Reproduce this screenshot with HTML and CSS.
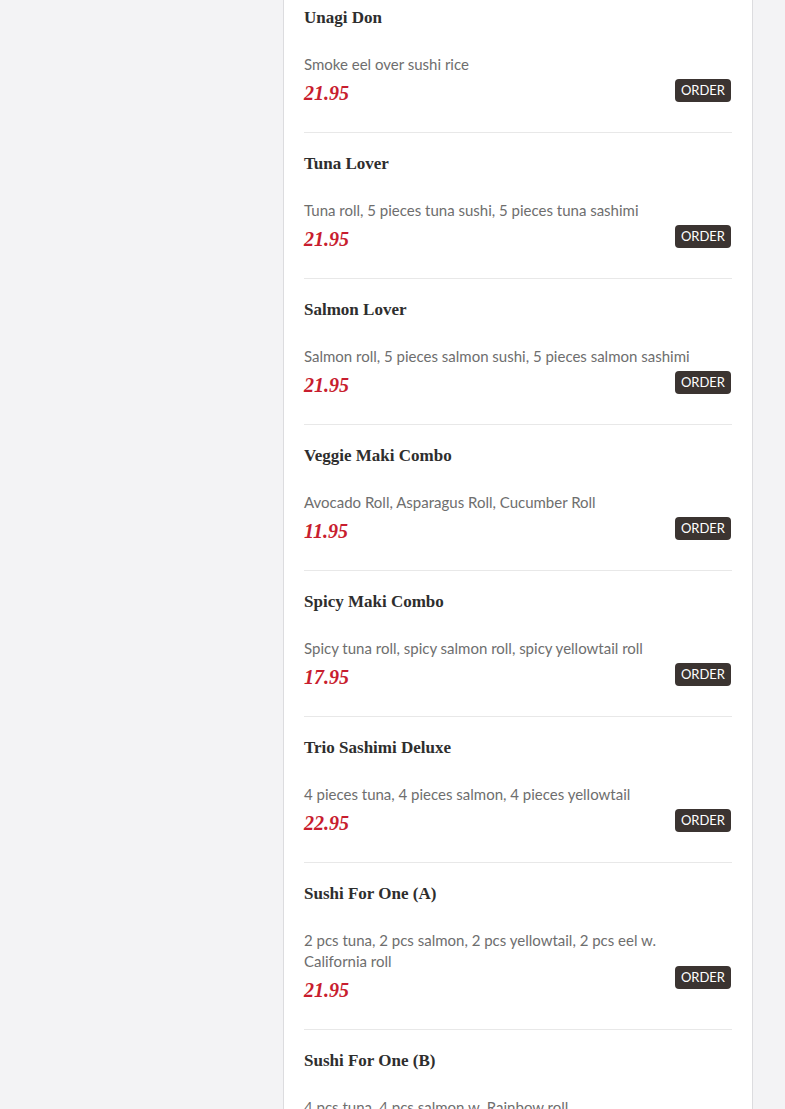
FILE: index.html
```html
<!DOCTYPE html>
<html>
<head>
<meta charset="utf-8">
<link rel="stylesheet" href="styles.css">
</head>
<body>
<div class="page">
  <aside class="side"></aside>
  <main class="card">
    <ul class="menu">
      <li class="item">
        <h3 class="name">Unagi Don</h3>
        <div class="body">
          <p class="desc">Smoke eel over sushi rice</p>
          <span class="price">21.95</span>
          <button class="order">ORDER</button>
        </div>
      </li>
      <li class="item">
        <h3 class="name">Tuna Lover</h3>
        <div class="body">
          <p class="desc">Tuna roll, 5 pieces tuna sushi, 5 pieces tuna sashimi</p>
          <span class="price">21.95</span>
          <button class="order">ORDER</button>
        </div>
      </li>
      <li class="item">
        <h3 class="name">Salmon Lover</h3>
        <div class="body">
          <p class="desc">Salmon roll, 5 pieces salmon sushi, 5 pieces salmon sashimi</p>
          <span class="price">21.95</span>
          <button class="order">ORDER</button>
        </div>
      </li>
      <li class="item">
        <h3 class="name">Veggie Maki Combo</h3>
        <div class="body">
          <p class="desc">Avocado Roll, Asparagus Roll, Cucumber Roll</p>
          <span class="price">11.95</span>
          <button class="order">ORDER</button>
        </div>
      </li>
      <li class="item">
        <h3 class="name">Spicy Maki Combo</h3>
        <div class="body">
          <p class="desc">Spicy tuna roll, spicy salmon roll, spicy yellowtail roll</p>
          <span class="price">17.95</span>
          <button class="order">ORDER</button>
        </div>
      </li>
      <li class="item">
        <h3 class="name">Trio Sashimi Deluxe</h3>
        <div class="body">
          <p class="desc">4 pieces tuna, 4 pieces salmon, 4 pieces yellowtail</p>
          <span class="price">22.95</span>
          <button class="order">ORDER</button>
        </div>
      </li>
      <li class="item">
        <h3 class="name">Sushi For One (A)</h3>
        <div class="body">
          <p class="desc">2 pcs tuna, 2 pcs salmon, 2 pcs yellowtail, 2 pcs eel w. California roll</p>
          <span class="price">21.95</span>
          <button class="order">ORDER</button>
        </div>
      </li>
      <li class="item">
        <h3 class="name">Sushi For One (B)</h3>
        <div class="body">
          <p class="desc">4 pcs tuna, 4 pcs salmon w. Rainbow roll</p>
          <span class="price">21.95</span>
          <button class="order">ORDER</button>
        </div>
      </li>
    </ul>
  </main>
</div>
</body>
</html>
```

FILE: styles.css
```css
html, body {
  margin: 0;
  padding: 0;
  background: #f3f3f5;
  height: 100%;
  overflow: hidden;
}
.page {
  display: flex;
  align-items: stretch;
  min-height: 1109px;
}
.side {
  width: 283px;
  flex: none;
}
.card {
  width: 470px;
  box-sizing: border-box;
  flex: none;
  background: #ffffff;
  border-left: 1px solid #dcdcdf;
  border-right: 1px solid #dcdcdf;
  padding: 0 20px;
}
.menu {
  list-style: none;
  margin: -13px 0 0 0;
  padding: 0;
}
.item {
  padding: 19px 0 25px;
  border-bottom: 1px solid #e8e8e8;
}
.name {
  margin: 0 0 24px;
  font-family: "Liberation Serif", "DejaVu Serif", serif;
  font-weight: bold;
  font-size: 17px;
  line-height: 24px;
  color: #2e2e2e;
}
.body {
  display: grid;
  grid-template-columns: 1fr auto;
  grid-template-rows: auto auto;
}
.desc {
  grid-column: 1 / 3;
  grid-row: 1;
  margin: 0 0 4px;
  padding-right: 30px;
  font-family: Lato, "Liberation Sans", sans-serif;
  font-size: 15px;
  line-height: 21px;
  color: #6e6e6e;
}
.price {
  grid-column: 1;
  grid-row: 2;
  font-family: "Liberation Serif", serif;
  font-style: italic;
  font-weight: bold;
  font-size: 20px;
  line-height: 28px;
  color: #c81d2e;
}
.order {
  grid-column: 2;
  grid-row: 1 / 3;
  align-self: center;
  margin: 20px 1px 0 0;
  height: 23px;
  padding: 0 6px;
  border: none;
  border-radius: 4px;
  background: #3b3431;
  color: #ffffff;
  font-family: Lato, "Liberation Sans", sans-serif;
  font-size: 13px;
  line-height: 23px;
}
```
